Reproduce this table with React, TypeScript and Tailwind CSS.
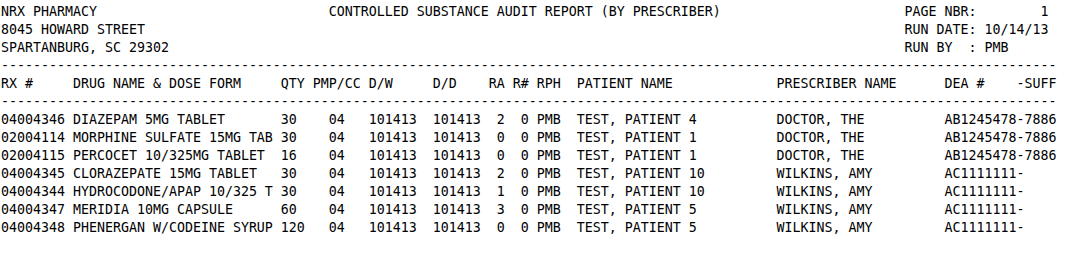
import React from "react";

type Part = [number, string];

function place(parts: Part[]): string {
  let s = "";
  for (const [col, text] of parts) {
    if (s.length < col) s = s + " ".repeat(col - s.length);
    s = s + text;
  }
  return s;
}

const DASHES = "-".repeat(132);

const rows = [
  ["04004346", "DIAZEPAM 5MG TABLET", "30", "2", "TEST, PATIENT 4", "DOCTOR, THE", "AB1245478-7886"],
  ["02004114", "MORPHINE SULFATE 15MG TAB", "30", "0", "TEST, PATIENT 1", "DOCTOR, THE", "AB1245478-7886"],
  ["02004115", "PERCOCET 10/325MG TABLET", "16", "0", "TEST, PATIENT 1", "DOCTOR, THE", "AB1245478-7886"],
  ["04004345", "CLORAZEPATE 15MG TABLET", "30", "2", "TEST, PATIENT 10", "WILKINS, AMY", "AC1111111-"],
  ["04004344", "HYDROCODONE/APAP 10/325 T", "30", "1", "TEST, PATIENT 10", "WILKINS, AMY", "AC1111111-"],
  ["04004347", "MERIDIA 10MG CAPSULE", "60", "3", "TEST, PATIENT 5", "WILKINS, AMY", "AC1111111-"],
  ["04004348", "PHENERGAN W/CODEINE SYRUP", "120", "0", "TEST, PATIENT 5", "WILKINS, AMY", "AC1111111-"],
];

const lines: string[] = [
  place([[0, "NRX PHARMACY"], [41, "CONTROLLED SUBSTANCE AUDIT REPORT (BY PRESCRIBER)"], [113, "PAGE NBR:"], [130, "1"]]),
  place([[0, "8045 HOWARD STREET"], [113, "RUN DATE: 10/14/13"]]),
  place([[0, "SPARTANBURG, SC 29302"], [113, "RUN BY  : PMB"]]),
  DASHES,
  place([
    [0, "RX #"],
    [9, "DRUG NAME & DOSE FORM"],
    [35, "QTY"],
    [39, "PMP/CC"],
    [46, "D/W"],
    [54, "D/D"],
    [61, "RA"],
    [64, "R#"],
    [67, "RPH"],
    [72, "PATIENT NAME"],
    [97, "PRESCRIBER NAME"],
    [118, "DEA #"],
    [127, "-SUFF"],
  ]),
  DASHES,
  ...rows.map((r) =>
    place([
      [0, r[0]],
      [9, r[1]],
      [35, r[2]],
      [41, "04"],
      [46, "101413"],
      [54, "101413"],
      [62, r[3]],
      [65, "0"],
      [67, "PMB"],
      [72, r[4]],
      [97, r[5]],
      [118, r[6]],
    ])
  ),
];

export default function App() {
  return (
    <div className="w-[1077px] h-[263px] bg-white overflow-hidden">
      <div
        className="pt-[3px] pl-[1px] text-[13.29px] leading-[18px] text-black"
        style={{ fontFamily: '"DejaVu Sans Mono", "Liberation Mono", monospace' }}
      >
        {lines.map((l, i) => (
          <div key={i} className="whitespace-pre h-[18px]">
            {l}
          </div>
        ))}
      </div>
    </div>
  );
}
